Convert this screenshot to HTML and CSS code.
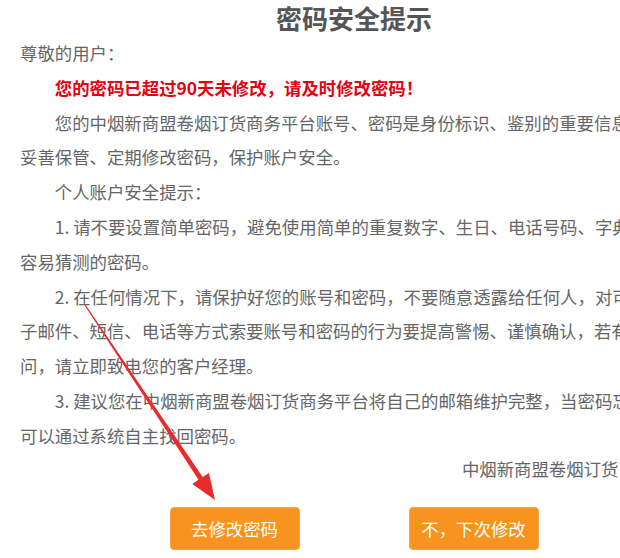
FILE: index.html
```html
<!DOCTYPE html>
<html>
  <head>
    <meta charset="utf-8">
    <link rel="stylesheet" href="styles.css">
  </head>
  <body>
    <div class="notice">
      <h1 class="title">密码安全提示</h1>
      <p class="greet">尊敬的用户：</p>
      <p class="warn">您的密码已超过90天未修改，请及时修改密码！</p>
      <p class="para">您的中烟新商盟卷烟订货商务平台账号、密码是身份标识、鉴别的重要信息，请<br>妥善保管、定期修改密码，保护账户安全。</p>
      <p class="para">个人账户安全提示：</p>
      <p class="para">1. 请不要设置简单密码，避免使用简单的重复数字、生日、电话号码、字典单词等<br>容易猜测的密码。</p>
      <p class="para">2. 在任何情况下，请保护好您的账号和密码，不要随意透露给任何人，对可疑的电<br>子邮件、短信、电话等方式索要账号和密码的行为要提高警惕、谨慎确认，若有疑<br>问，请立即致电您的客户经理。</p>
      <p class="para">3. 建议您在中烟新商盟卷烟订货商务平台将自己的邮箱维护完整，当密码忘记时<br>可以通过系统自主找回密码。</p>
      <p class="sign">中烟新商盟卷烟订货商务平台</p>
      <div class="actions">
        <button class="btn">去修改密码</button>
        <button class="btn">不，下次修改</button>
      </div>

      <!-- red pointer drawn over the text -->
      <svg class="arrow" width="620" height="558" viewBox="0 0 620 558">
        <polygon fill="#ea2b2b" points="84.5,305.3 85.5,304.7 202.7,477 208.9,472.9 215,500 192.3,484 198.5,479.8" />
      </svg>
    </div>
  </body>
</html>
```

FILE: styles.css
```css
html,
body {
  margin: 0;
  overflow: hidden;
  background: #fff;
}

.notice {
  position: relative;
  width: 668px;
  padding-left: 20px;
  font-family: "Noto Sans CJK SC", "Noto Sans", sans-serif;
  font-size: 17.4px;
  color: #666;
}

.title {
  margin: 0;
  font-size: 26px;
  line-height: 36px;
  font-weight: bold;
  color: #555;
  text-align: center;
}

.greet,
.warn,
.para {
  margin: 0;
  line-height: 34.8px;
  white-space: nowrap;
}

.warn,
.para {
  text-indent: 2em;
}

.warn {
  color: #e60012;
  font-weight: bold;
}

.sign {
  margin: 0;
  line-height: 26px;
  margin-top: 2px;
  text-align: right;
  white-space: nowrap;
}

.actions {
  display: flex;
  justify-content: center;
  gap: 109px;
  margin-top: 25px;
}

.btn {
  width: 130px;
  height: 43px;
  border: 1px solid #f4a64c;
  border-radius: 4px;
  background-color: #f7931e;
  color: #fff;
  font-family: "Noto Sans CJK SC", "Noto Sans", sans-serif;
  font-size: 17.4px;
  padding: 0;
}

.arrow {
  position: absolute;
  left: 0;
  top: 0;
  pointer-events: none;
}
```
